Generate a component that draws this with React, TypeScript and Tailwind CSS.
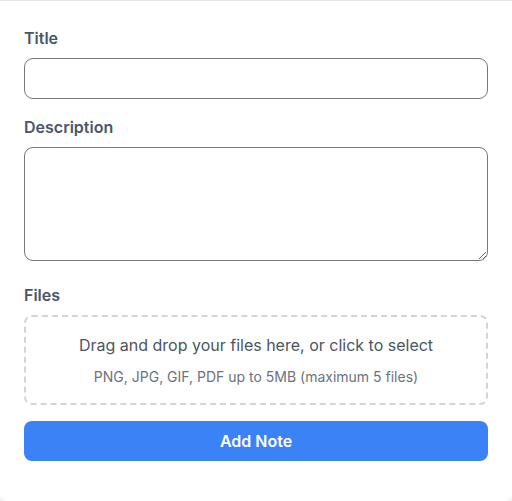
export default function App() {
  return (
    <div
      className="min-h-[501px] bg-[#f3f4f6]"
      style={{ fontFamily: "Inter, 'Noto Sans', sans-serif" }}
    >
      <form className="h-[501px] rounded-b-lg border-t border-[#e5e7eb] bg-white px-6 pt-[25px]">
        <label className="mb-2 block text-base font-semibold leading-6 text-[#4a5568]">
          Title
        </label>
        <input
          type="text"
          className="mb-4 block h-[41px] w-full rounded-[9px] border border-[#77777d] px-3 outline-none"
        />

        <label className="mb-2 block text-base font-semibold leading-6 text-[#4a5568]">
          Description
        </label>
        <textarea
          rows={4}
          className="mb-[22px] block h-[114px] w-full rounded-[9px] border border-[#77777d] px-3 py-2 outline-none"
        />

        <label className="mb-2 block text-base font-semibold leading-6 text-[#4a5568]">
          Files
        </label>
        <div className="mb-4 flex h-[90px] flex-col items-center rounded-lg border-2 border-dashed border-[#d4d4d8] pt-4 text-center">
          <p className="text-base leading-6 text-[#4b5563]">
            Drag and drop your files here, or click to select
          </p>
          <p className="mt-[10px] text-sm leading-5 text-[#6b7280]">
            PNG, JPG, GIF, PDF up to 5MB (maximum 5 files)
          </p>
        </div>

        <button
          type="button"
          className="block h-10 w-full rounded-lg bg-[#3b82f6] text-base font-semibold text-white"
        >
          Add Note
        </button>
      </form>
    </div>
  );
}
